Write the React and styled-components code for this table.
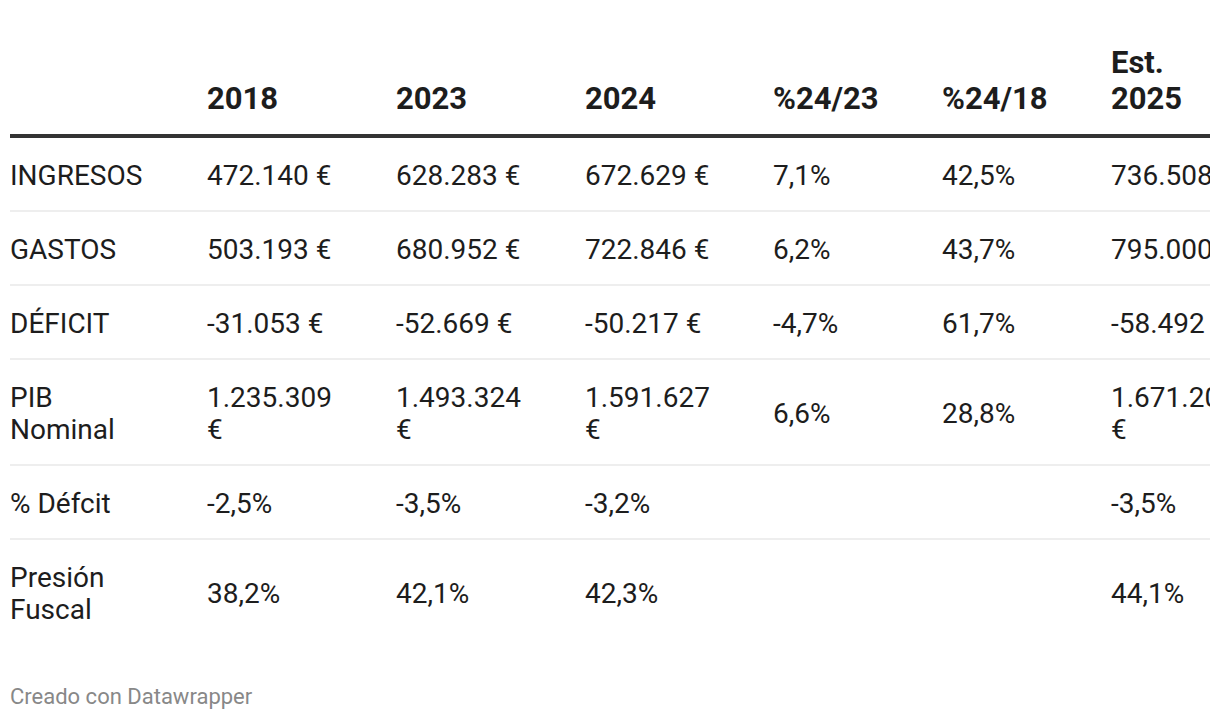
import React from "react";
import styled, { createGlobalStyle } from "styled-components";

const Global = createGlobalStyle`
  html, body { margin: 0; padding: 0; background: #fff; }
  body { font-family: Roboto, "Liberation Sans", sans-serif; }
`;

const Page = styled.div`
  width: 1220px;
  height: 720px;
  box-sizing: border-box;
  padding: 45px 10px 0 10px;
  overflow: hidden;
`;

const Clip = styled.div`
  width: 1200px;
  overflow: hidden;
`;

const Table = styled.table`
  border-collapse: collapse;
  table-layout: fixed;
  width: 1270px;
  color: #1d1d1d;
`;

const Th = styled.th`
  text-align: left;
  vertical-align: bottom;
  font-weight: 700;
  font-size: 31px;
  line-height: 36px;
  white-space: pre-line;
  padding: 0 ${(p) => p.$pr}px 17px 0;
  border-bottom: 4px solid #333;
  color: #1d1d1d;
`;

const Td = styled.td`
  text-align: left;
  vertical-align: middle;
  font-size: 28px;
  line-height: 32px;
  padding: 22px ${(p) => p.$pr}px 18px 0;
  border-bottom: ${(p) => (p.$last ? "none" : "2px solid #eee")};
`;

const Footer = styled.div`
  margin-top: 40px;
  font-size: 22px;
  line-height: 26px;
  color: #888;
`;

const cols = [197, 189, 189, 188, 169, 169, 169];
const pads = [50, 45, 45, 45, 30, 30, 43];

const headers = ["", "2018", "2023", "2024", "%24/23", "%24/18", "Est.\n2025"];

const rows = [
  ["INGRESOS", "472.140 €", "628.283 €", "672.629 €", "7,1%", "42,5%", "736.508 €"],
  ["GASTOS", "503.193 €", "680.952 €", "722.846 €", "6,2%", "43,7%", "795.000 €"],
  ["DÉFICIT", "-31.053 €", "-52.669 €", "-50.217 €", "-4,7%", "61,7%", "-58.492 €"],
  ["PIB Nominal", "1.235.309 €", "1.493.324 €", "1.591.627 €", "6,6%", "28,8%", "1.671.200 €"],
  ["% Défcit", "-2,5%", "-3,5%", "-3,2%", "", "", "-3,5%"],
  ["Presión Fuscal", "38,2%", "42,1%", "42,3%", "", "", "44,1%"],
];

export default function App() {
  return (
    <>
      <Global />
      <Page>
        <Clip>
          <Table>
            <colgroup>
              {cols.map((w, i) => (
                <col key={i} style={{ width: w }} />
              ))}
            </colgroup>
            <thead>
              <tr>
                {headers.map((h, i) => (
                  <Th key={i} $pr={pads[i]}>
                    {h}
                  </Th>
                ))}
              </tr>
            </thead>
            <tbody>
              {rows.map((r, ri) => (
                <tr key={ri}>
                  {r.map((c, ci) => (
                    <Td key={ci} $pr={pads[ci]} $last={ri === rows.length - 1}>
                      {c}
                    </Td>
                  ))}
                </tr>
              ))}
            </tbody>
          </Table>
        </Clip>
        <Footer>Creado con Datawrapper</Footer>
      </Page>
    </>
  );
}
